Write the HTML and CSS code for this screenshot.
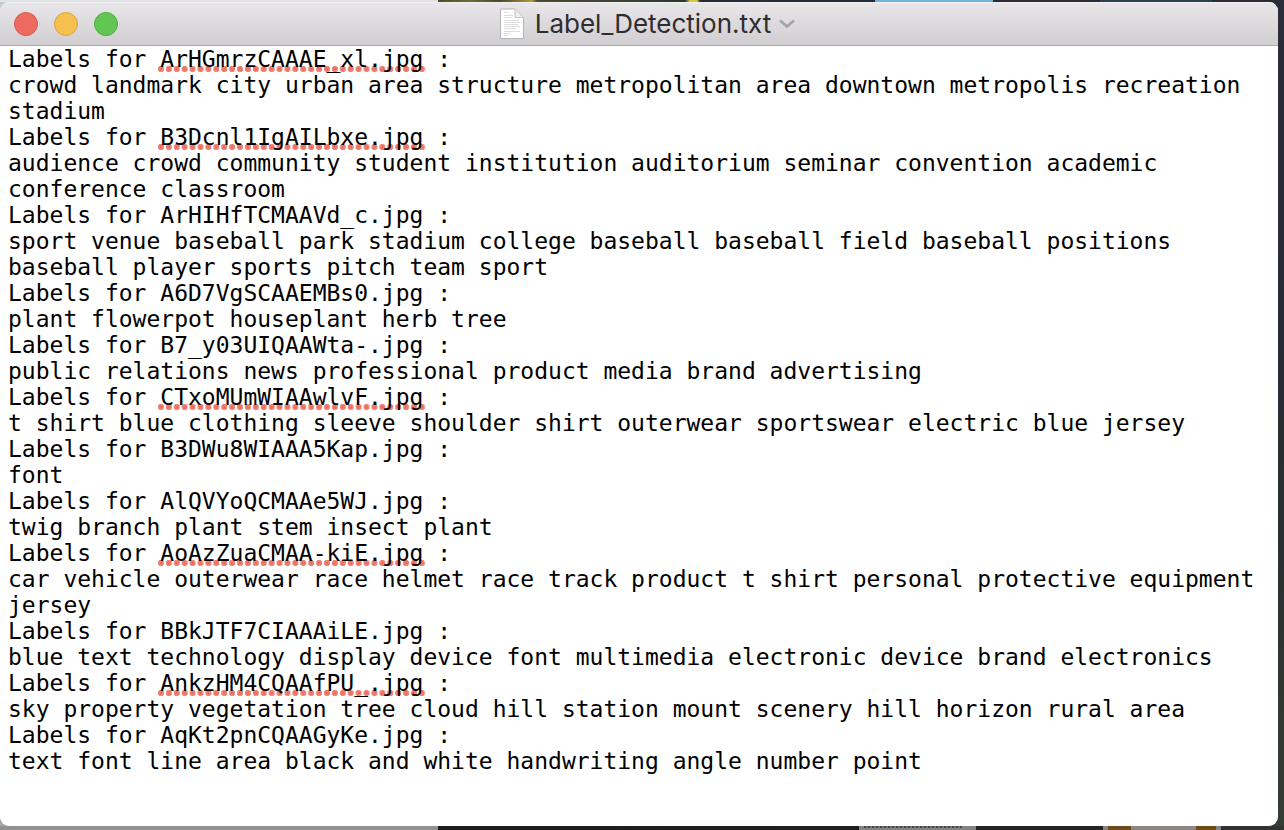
FILE: index.html
```html
<!DOCTYPE html>
<html lang="en">
<head>
<meta charset="utf-8">
<title>Label_Detection.txt</title>
<link rel="stylesheet" href="styles.css">
</head>
<body>
<div class="desktop">
<main class="window">
<header class="titlebar">
<div class="controls">
<button class="light close" type="button" aria-label="Close"></button>
<button class="light minimize" type="button" aria-label="Minimize"></button>
<button class="light expand" type="button" aria-label="Zoom"></button>
</div>
<div class="title">
<svg class="doc" viewBox="0 0 26 32" aria-hidden="true">
<path d="M1.500 1H16L24.500 9.500V30.500H1.500Z" fill="#fff" stroke="#b4b3b5"/>
<path d="M16 1V9.500H24.500Z" fill="#ededed" stroke="#c8c8c8"/>
<path d="M5 4.500h4M5 7.500h9M5 9.500h8M5 12.500h15M5 14.500h16M5 16.500h14M5 18.500h16M5 20.500h12M5 23.500h16M5 25.500h7M5 27.500h4" stroke="#dcdcdc" fill="none"/>
</svg>
<h1 class="name">Label_Detection.txt</h1>
</div>
<button class="menu" type="button" aria-label="Document options"><svg class="chevron" viewBox="0 0 16 10" aria-hidden="true"><path d="M1 1.500L8 7.500L15 1.500" fill="none" stroke="#a3a2a5" stroke-width="2.600"/></svg></button>
</header>
<div class="editor" role="textbox" aria-multiline="true" aria-label="Document text" contenteditable="true" spellcheck="false">
<p>Labels for <span class="misspelled">ArHGmrzCAAAE_xl.jpg</span> :</p>
<p>crowd landmark city urban area structure metropolitan area downtown metropolis recreation stadium</p>
<p>Labels for <span class="misspelled">B3Dcnl1IgAILbxe.jpg</span> :</p>
<p>audience crowd community student institution auditorium seminar convention academic conference classroom</p>
<p>Labels for ArHIHfTCMAAVd_c.jpg :</p>
<p>sport venue baseball park stadium college baseball baseball field baseball positions baseball player sports pitch team sport</p>
<p>Labels for A6D7VgSCAAEMBs0.jpg :</p>
<p>plant flowerpot houseplant herb tree</p>
<p>Labels for B7_y03UIQAAWta-.jpg :</p>
<p>public relations news professional product media brand advertising</p>
<p>Labels for <span class="misspelled">CTxoMUmWIAAwlvF.jpg</span> :</p>
<p>t shirt blue clothing sleeve shoulder shirt outerwear sportswear electric blue jersey</p>
<p>Labels for B3DWu8WIAAA5Kap.jpg :</p>
<p>font</p>
<p>Labels for AlQVYoQCMAAe5WJ.jpg :</p>
<p>twig branch plant stem insect plant</p>
<p>Labels for <span class="misspelled">AoAzZuaCMAA-kiE.jpg</span> :</p>
<p>car vehicle outerwear race helmet race track product t shirt personal protective equipment jersey</p>
<p>Labels for BBkJTF7CIAAAiLE.jpg :</p>
<p>blue text technology display device font multimedia electronic device brand electronics</p>
<p>Labels for <span class="misspelled">AnkzHM4CQAAfPU_.jpg</span> :</p>
<p>sky property vegetation tree cloud hill station mount scenery hill horizon rural area</p>
<p>Labels for AqKt2pnCQAAGyKe.jpg :</p>
<p>text font line area black and white handwriting angle number point</p>
</div>
</main>
</div>
</body>
</html>
```
FILE: styles.css
```css
* { box-sizing: border-box; }
body { margin: 0; }
.desktop {
  min-height: 100vh;
  display: flex;
  padding: 2px 6px 4px 0;
  background:
    linear-gradient(90deg, #dfe3e3 438px, #4a4d2c 438px, #6b6a35 470px, #454b32 500px, #b09a3c 532px, #454b35 537px, #3b4232 630px, #2c3532 685px, #d8c83c 690px, #d8c83c 697px, #272d36 700px, #272d36 875px, #73b4d6 875px, #73b4d6 993px, #2a2d34 993px, #2a2d34 1100px, #2d4250 1100px, #2d4250 1212px, #2a2c36 1212px) top / 100% 2px no-repeat,
    repeating-linear-gradient(90deg, #454345 0 2px, #747274 2px 4px) 864px calc(100% - 2px) / 98px 2px no-repeat,
    linear-gradient(90deg, #929092 438px, #1e1b1f 438px, #211e21 859px, #858384 859px, #858384 976px, #252326 976px, #252326 1103px, #858384 1103px, #858384 1108px, #714817 1108px, #714817 1131px, #8e8684 1131px, #8e8684 1196px, #714817 1196px, #714817 1216px, #858384 1216px, #858384 1221px, #303331 1221px) bottom / 100% 4px no-repeat,
    linear-gradient(#c8caca, #a8a6a8) left / 438px 100% no-repeat,
    linear-gradient(#2a2c38, #262c35 40%, #27302f 65%, #353e35);
}
.window {
  flex: 1;
  display: flex;
  flex-direction: column;
  overflow: hidden;
  background: #fff;
  border-radius: 9px;
}
.titlebar {
  height: 44px;
  display: grid;
  grid-template-columns: 1fr auto 1fr;
  align-items: center;
  padding: 0 14px;
  background: linear-gradient(#e9e6e9, #d0ced0);
  border-top: 1px solid #f2f0f2;
  border-bottom: 1px solid #aaa8aa;
}
.controls { display: flex; gap: 16px; }
.light {
  width: 24px;
  height: 24px;
  padding: 0;
  border: 1px solid;
  border-radius: 50%;
}
.close { background: #ee6b60; border-color: #d9584f; }
.minimize { background: #f6c04f; border-color: #dca43c; }
.expand { background: #62c655; border-color: #4cab41; }
.title { display: flex; align-items: center; }
.doc { width: 26px; height: 32px; }
.name {
  margin: 0 8px 0 10px;
  font: 400 26px/32px Inter, "Liberation Sans", sans-serif;
  color: #2e2d2f;
}
.menu {
  display: flex;
  justify-self: start;
  padding: 0;
  border: 0;
  background: none;
}
.chevron { width: 16px; height: 10px; }
.editor {
  flex: 1;
  padding: 0 8px;
  font: 23px/26px "DejaVu Sans Mono", monospace;
  color: #000;
  outline: none;
}
.editor p { margin: 0; }
.misspelled {
  display: inline-block;
  margin: 0 -3px;
  padding: 0 3px;
  background: radial-gradient(circle at 50% 50%, #ee6f60 1px, #f28d80 3px, transparent 3px) left bottom / 8px 6px round no-repeat;
}
```
